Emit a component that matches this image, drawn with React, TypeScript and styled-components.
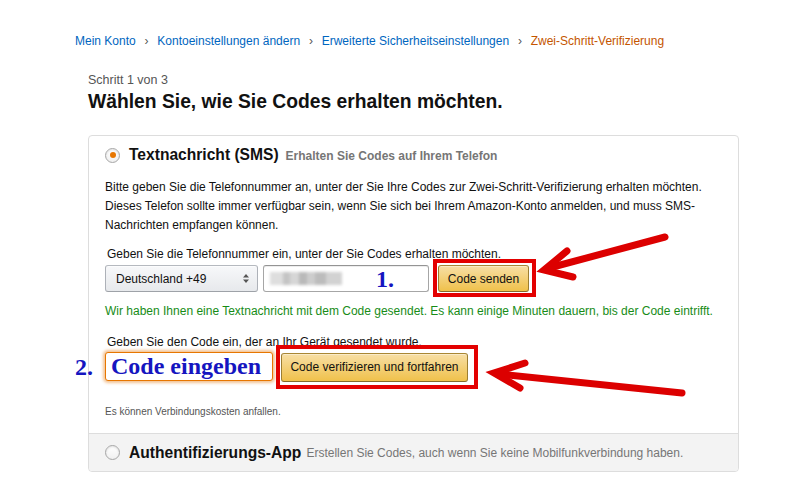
import styled, { createGlobalStyle } from 'styled-components';

const GlobalStyle = createGlobalStyle`
  body {
    margin: 0;
    background: #fff;
    font-family: "Liberation Sans", Arial, sans-serif;
    color: #111;
  }
`;

const Page = styled.div`
  position: relative;
  width: 800px;
  height: 500px;
  padding: 33px 0 0 75px;
  box-sizing: border-box;
  overflow: hidden;
`;

const Breadcrumb = styled.nav`
  display: flex;
  align-items: center;
  font-size: 12px;
  line-height: 16px;
`;

const Crumb = styled.a<{ $current?: boolean }>`
  color: ${(p) => (p.$current ? '#c45500' : '#0066c0')};
  text-decoration: none;
`;

const Sep = styled.span`
  color: #555;
  margin: 0 8.8px;
`;

const Main = styled.main`
  margin: 23px 0 0 13px;
  width: 651px;
`;

const Step = styled.div`
  font-size: 12.5px;
  line-height: 16px;
  color: #555;
`;

const Heading = styled.h1`
  margin: 2px 0 0;
  font-size: 19.3px;
  line-height: 24px;
  font-weight: 700;
  color: #111;
`;

const Card = styled.div`
  margin-top: 21px;
  border: 1px solid #ddd;
  border-radius: 4px;
`;

const TopSection = styled.section`
  padding: 9px 17px 14.5px 16px;
`;

const OptionRow = styled.div`
  display: flex;
  align-items: center;
  height: 20px;
`;

const Radio = styled.span<{ $checked?: boolean }>`
  width: 13px;
  height: 13px;
  flex: none;
  border: 1px solid #a6a6a6;
  border-radius: 50%;
  background: linear-gradient(#fff, #f1f1f1);
  box-shadow: inset 0 1px 2px rgba(0, 0, 0, 0.12);
  display: inline-flex;
  align-items: center;
  justify-content: center;
  margin-right: 9px;

  &::after {
    content: '';
    display: ${(p) => (p.$checked ? 'block' : 'none')};
    width: 6px;
    height: 6px;
    border-radius: 50%;
    background: #e77600;
  }
`;

const OptionTitle = styled.span`
  font-size: 15.6px;
  font-weight: 700;
  color: #111;
`;

const OptionSub = styled.span<{ $bold?: boolean }>`
  font-size: 12px;
  font-weight: ${(p) => (p.$bold ? 700 : 400)};
  color: #767676;
  margin-left: ${(p) => (p.$bold ? 7 : 5)}px;
`;

const Paragraph = styled.p`
  margin: 13px 0 0;
  font-size: 12px;
  line-height: 19px;
  color: #111;
`;

const FieldLabel = styled.div<{ $top: number }>`
  margin-top: ${(p) => p.$top}px;
  padding-left: 2px;
  font-size: 12px;
  line-height: 16px;
  color: #111;
`;

const PhoneRow = styled.div`
  display: flex;
  align-items: center;
  margin-top: 3px;
`;

const SelectBox = styled.div`
  width: 153px;
  height: 27px;
  box-sizing: border-box;
  border: 1px solid #adb1b8;
  border-top-color: #b5b9bf;
  border-bottom-color: #9ea2a8;
  border-radius: 3px;
  background: linear-gradient(#f7f8fa, #e7e9ec);
  box-shadow: inset 0 1px 0 rgba(255, 255, 255, 0.6);
  padding: 0 8px 0 10px;
  display: flex;
  align-items: center;
  justify-content: space-between;
  font-size: 12px;
  color: #111;
`;

const TextField = styled.div`
  width: 166px;
  height: 27px;
  margin-left: 5px;
  box-sizing: border-box;
  border: 1px solid #a6a6a6;
  border-top-color: #949494;
  border-radius: 3px;
  box-shadow: inset 0 1px 0 rgba(0, 0, 0, 0.07);
  padding: 0 6px;
  display: flex;
  align-items: center;
  background: #fff;
`;

const Blurred = styled.span`
  width: 72px;
  height: 13px;
  background: linear-gradient(
    90deg,
    #dedede 0 18%,
    #c4c4c4 18% 28%,
    #d6d6d6 28% 40%,
    #b9b9b9 40% 52%,
    #cdcdcd 52% 62%,
    #bcbcbc 62% 78%,
    #d2d2d2 78% 100%
  );
  filter: blur(1.6px);
`;

const Marker = styled.span`
  font-family: "Liberation Serif", "Times New Roman", serif;
  font-weight: 700;
  font-size: 24px;
  color: #1515c0;
  line-height: 1;
`;

const StepOne = styled(Marker)`
  margin-left: 34px;
`;

const StepTwo = styled(Marker)`
  position: absolute;
  left: -30px;
  top: 3px;
`;

const RedBox = styled.div<{ $pad: string; $margin: string }>`
  position: relative;
  z-index: 1;
  display: flex;
  border: 4px solid #e30000;
  background: #fff;
  padding: ${(p) => p.$pad};
  margin: ${(p) => p.$margin};
`;

const YellowButton = styled.button<{ $w: number; $h: number }>`
  width: ${(p) => p.$w}px;
  height: ${(p) => p.$h}px;
  box-sizing: border-box;
  border: 1px solid;
  border-color: #a88734 #9c7e31 #846a29;
  border-radius: 3px;
  background: linear-gradient(#f7dfa5, #f0c14b);
  box-shadow: inset 0 1px 0 rgba(255, 255, 255, 0.4);
  font-family: "Liberation Sans", Arial, sans-serif;
  font-size: 12px;
  color: #111;
  padding: 0;
  cursor: pointer;
`;

const Success = styled.div`
  margin-top: 11px;
  font-size: 12px;
  line-height: 16px;
  color: #178c17;
`;

const CodeRow = styled.div`
  position: relative;
  display: flex;
  align-items: center;
  margin-top: 2px;
`;

const CodeInput = styled.input`
  width: 168px;
  height: 29px;
  box-sizing: border-box;
  border: 1px solid #e77600;
  border-radius: 3px;
  box-shadow: 0 0 3px 2px rgba(228, 121, 17, 0.45);
  padding: 0 5px;
  outline: none;
  font-family: "Liberation Serif", "Times New Roman", serif;
  font-weight: 700;
  font-size: 24px;
  color: #1515c0;
  background: #fff;
`;

const Note = styled.div`
  margin-top: 23.5px;
  font-size: 10px;
  line-height: 14px;
  color: #555;
`;

const BottomSection = styled.section`
  height: 37px;
  display: flex;
  align-items: center;
  padding: 0 16px;
  background: #f3f3f3;
  border-top: 1px solid #ddd;
  border-radius: 0 0 4px 4px;
`;

const Overlay = styled.svg`
  position: absolute;
  left: 0;
  top: 0;
  pointer-events: none;
`;

function SelectArrows() {
  return (
    <svg width="6" height="9" viewBox="0 0 6 9">
      <path d="M3 0 L6 3.5 H0 Z M3 9 L6 5.5 H0 Z" fill="#555" />
    </svg>
  );
}

export default function App() {
  return (
    <Page>
      <GlobalStyle />
      <Breadcrumb>
        <Crumb href="#">Mein Konto</Crumb>
        <Sep>›</Sep>
        <Crumb href="#">Kontoeinstellungen ändern</Crumb>
        <Sep>›</Sep>
        <Crumb href="#">Erweiterte Sicherheitseinstellungen</Crumb>
        <Sep>›</Sep>
        <Crumb $current>Zwei-Schritt-Verifizierung</Crumb>
      </Breadcrumb>

      <Main>
        <Step>Schritt 1 von 3</Step>
        <Heading>Wählen Sie, wie Sie Codes erhalten möchten.</Heading>

        <Card>
          <TopSection>
            <OptionRow>
              <Radio $checked />
              <span>
                <OptionTitle>Textnachricht (SMS)</OptionTitle>
                <OptionSub $bold>Erhalten Sie Codes auf Ihrem Telefon</OptionSub>
              </span>
            </OptionRow>
            <Paragraph>
              Bitte geben Sie die Telefonnummer an, unter der Sie Ihre Codes zur
              Zwei-Schritt-Verifizierung erhalten möchten. Dieses Telefon sollte immer
              verfügbar sein, wenn Sie sich bei Ihrem Amazon-Konto anmelden, und muss
              SMS-Nachrichten empfangen können.
            </Paragraph>

            <FieldLabel $top={11}>
              Geben Sie die Telefonnummer ein, unter der Sie Codes erhalten möchten.
            </FieldLabel>
            <PhoneRow>
              <SelectBox>
                <span>Deutschland +49</span>
                <SelectArrows />
              </SelectBox>
              <TextField>
                <Blurred />
                <StepOne>1.</StepOne>
              </TextField>
              <RedBox $pad="2px 3px 1px 1px" $margin="-6px 0 -5px 4px">
                <YellowButton $w={91} $h={27}>Code senden</YellowButton>
              </RedBox>
            </PhoneRow>

            <Success>
              Wir haben Ihnen eine Textnachricht mit dem Code gesendet. Es kann einige
              Minuten dauern, bis der Code eintrifft.
            </Success>

            <FieldLabel $top={15}>
              Geben Sie den Code ein, der an Ihr Gerät gesendet wurde.
            </FieldLabel>
            <CodeRow>
              <StepTwo>2.</StepTwo>
              <CodeInput defaultValue="Code eingeben" />
              <RedBox $pad="4px 6px 3px 1px" $margin="-8px 0 -8px 3px">
                <YellowButton $w={187} $h={29}>Code verifizieren und fortfahren</YellowButton>
              </RedBox>
            </CodeRow>

            <Note>Es können Verbindungskosten anfallen.</Note>
          </TopSection>

          <BottomSection>
            <Radio />
            <OptionTitle>Authentifizierungs-App</OptionTitle>
            <OptionSub>
              Erstellen Sie Codes, auch wenn Sie keine Mobilfunkverbindung haben.
            </OptionSub>
          </BottomSection>
        </Card>
      </Main>

      <Overlay width="800" height="500" viewBox="0 0 800 500">
        <g stroke="#dc0000" strokeWidth="7" strokeLinecap="round" fill="none">
          <line x1="549" y1="268" x2="665" y2="237" />
          <polyline points="567,251 544,270 573,277" strokeLinejoin="miter" />
          <line x1="499" y1="374" x2="682" y2="393" />
          <polyline points="525,363 494,373 520,388" strokeLinejoin="miter" />
        </g>
      </Overlay>
    </Page>
  );
}
